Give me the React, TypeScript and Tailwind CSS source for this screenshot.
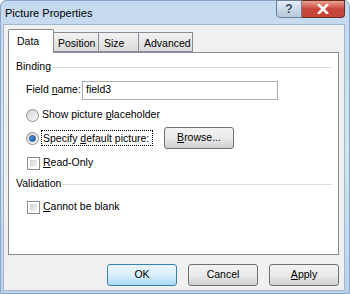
import React from 'react';

// Small Win7-style radio button
const Radio: React.FC<{ checked?: boolean }> = ({ checked }) => (
  <span className="w-[13px] h-[13px] rounded-full border border-[#8e8f8f] bg-gradient-to-br from-[#d4d4d4] to-[#fbfbfb] flex items-center justify-center shrink-0">
    {checked && (
      <span className="w-[7px] h-[7px] rounded-full bg-gradient-to-br from-[#5ea6e8] to-[#1b4f9c] border border-[#1d4f91]" />
    )}
  </span>
);

// Small Win7-style checkbox
const Check: React.FC = () => (
  <span className="w-[13px] h-[13px] border border-[#8e8f8f] bg-white p-[2px] shrink-0">
    <span className="block w-full h-full bg-gradient-to-br from-[#cbcfd5] to-[#f6f6f6]" />
  </span>
);

// Dialog push button
const Button: React.FC<{ children: React.ReactNode; primary?: boolean }> = ({ children, primary }) => (
  <button
    className={`w-[70px] h-[22px] rounded-[3px] border text-[10.5px] text-black flex items-center justify-center ${
      primary
        ? 'border-[#3c7fb1] bg-gradient-to-b from-[#eaf6fd] via-[#d9f0fc] to-[#a7d9f5]'
        : 'border-[#707070] bg-gradient-to-b from-[#f2f2f2] via-[#ebebeb] to-[#cfcfcf]'
    }`}
  >
    {children}
  </button>
);

// Group header with a line running to the right
const GroupHeader: React.FC<{ label: string; className?: string }> = ({ label, className }) => (
  <div className={`flex items-center h-[16px] pl-[7px] pr-[6px] ${className ?? ''}`}>
    <span className="mr-[1px]">{label}</span>
    <span className="flex-1 h-px bg-[#d5dfe5]" />
  </div>
);

const App: React.FC = () => {
  return (
    <div
      className="w-[350px] h-[294px] flex flex-col rounded-t-[6px] border border-[#8aa6c8] bg-gradient-to-b from-[#c4d9ef] via-[#d3e3f4] to-[#bcd2ea] text-[10.5px] text-black"
      style={{ fontFamily: '"Liberation Sans", Arial, sans-serif' }}
    >
      {/* Title bar */}
      <div className="h-[23px] flex justify-between shrink-0">
        <span className="pl-[4px] pt-[4px] text-[11px] text-black">Picture Properties</span>
        <div className="flex mr-[4px] -mt-px">
          <div className="w-[26px] h-[18px] rounded-bl-[4px] border border-[#6c7e96] bg-gradient-to-b from-[#e6eef7] via-[#cbd9e8] to-[#b9cadd] flex items-center justify-center text-[12px] font-bold text-[#3a4a60]">
            ?
          </div>
          <div className="w-[43px] h-[18px] rounded-br-[4px] border border-l-0 border-[#6b2c24] bg-gradient-to-b from-[#e8a393] via-[#c9453a] to-[#c7453a] flex items-center justify-center">
            <svg width="12" height="10" viewBox="0 0 12 10">
              <path d="M2 1 L10 9 M10 1 L2 9" stroke="#ffffff" strokeWidth="2.6" strokeLinecap="square" />
            </svg>
          </div>
        </div>
      </div>

      {/* Client area */}
      <div className="flex-1 ml-[2px] mr-[4px] mb-[2px] bg-[#f0f0f0] border border-[#a2b6cc] pl-[4px] pr-[5px] pt-[3px] flex flex-col">
        {/* Tabs */}
        <div className="flex items-end h-[24px]">
          <div className="w-[46px] h-[24px] -mb-px z-10 bg-white border border-b-0 border-[#898c95] rounded-t-[2px] pl-[8px] pt-[4px]">
            Data
          </div>
          <div className="w-[45px] h-[20px] border border-l-0 border-[#898c95] bg-gradient-to-b from-[#f2f2f2] to-[#dcdcdc] pl-[4px] pt-[3px]">
            Position
          </div>
          <div className="w-[40px] h-[20px] border border-l-0 border-[#898c95] bg-gradient-to-b from-[#f2f2f2] to-[#dcdcdc] pl-[5px] pt-[3px]">
            Size
          </div>
          <div className="w-[54px] h-[20px] border border-l-0 border-[#898c95] bg-gradient-to-b from-[#f2f2f2] to-[#dcdcdc] pl-[5px] pt-[3px]">
            Advanced
          </div>
        </div>

        {/* Tab panel */}
        <div className="h-[203px] bg-white border border-[#898c95] flex flex-col">
          <GroupHeader label="Binding" className="mt-[6px]" />

          <div className="flex items-center h-[20px] mt-[5px] pl-[17px]">
            <span className="w-[56px] whitespace-nowrap">
              Field <span className="underline">n</span>ame:
            </span>
            <div className="w-[196px] h-[19px] border border-[#abadb3] bg-white flex items-center pl-[3px]">field3</div>
          </div>

          <div className="flex items-center h-[16px] mt-[7px] pl-[17px] gap-[3px]">
            <Radio />
            <span>
              Show picture <span className="underline">p</span>laceholder
            </span>
          </div>

          <div className="flex items-center h-[22px] mt-[4px] pl-[17px]">
            <Radio checked />
            <span className="ml-[2px] w-[112px] px-px border border-dotted border-black leading-[14px] whitespace-nowrap">
              Specify <span className="underline">d</span>efault picture:
            </span>
            <div className="ml-[11px]">
              <Button>
                <span>
                  <span className="underline">B</span>rowse...
                </span>
              </Button>
            </div>
          </div>

          <div className="flex items-center h-[16px] mt-[6px] pl-[18px] gap-[3px]">
            <Check />
            <span>
              <span className="underline">R</span>ead-Only
            </span>
          </div>

          <GroupHeader label="Validation" className="mt-[5px]" />

          <div className="flex items-center h-[16px] mt-[7px] pl-[18px] gap-[3px]">
            <Check />
            <span>
              <span className="underline">C</span>annot be blank
            </span>
          </div>
        </div>

        {/* Dialog buttons */}
        <div className="flex justify-end gap-[11px] mt-[9px]">
          <Button primary>OK</Button>
          <Button>Cancel</Button>
          <Button>
            <span>
              <span className="underline">A</span>pply
            </span>
          </Button>
        </div>
      </div>
    </div>
  );
};

export default App;
